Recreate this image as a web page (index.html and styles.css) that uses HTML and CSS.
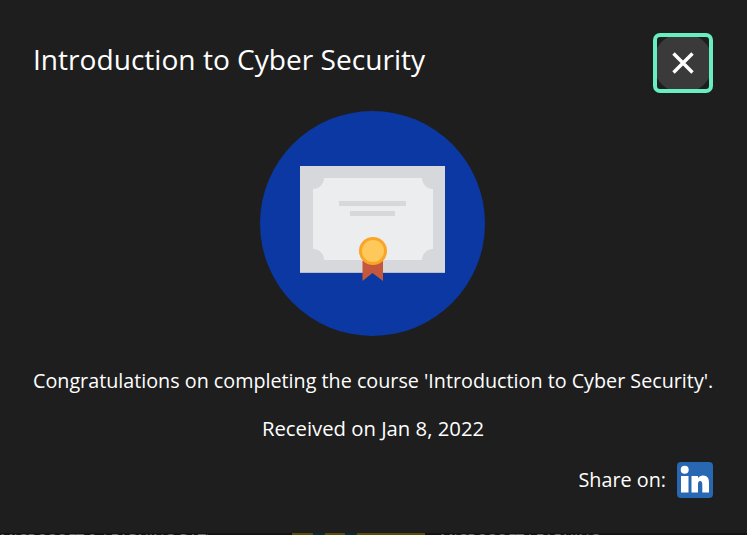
FILE: index.html
```html
<!DOCTYPE html>
<html lang="en">
<head>
<meta charset="utf-8">
<title>Introduction to Cyber Security</title>
<link rel="stylesheet" href="styles.css">
</head>
<body>
<main class="modal">
  <header class="modal-head">
    <h1 class="modal-title">Introduction to Cyber Security</h1>
    <button class="close" aria-label="Close">
      <svg class="close-icon" viewBox="0 0 22 22"><path d="M1.500 1.500 20.500 20.500M20.500 1.500 1.500 20.500"/></svg>
    </button>
  </header>
  <div class="badge-wrap">
    <svg class="badge" viewBox="0 0 225 225">
      <circle cx="112.5" cy="112.5" r="112.5" fill="#0b38a2"/>
      <rect x="40" y="55" width="145" height="107" fill="#d7d8db"/>
      <rect x="40" y="161" width="145" height="1" fill="#b9bccb"/>
      <path d="M64 67H162A11 11 0 0 0 173 78V138A11 11 0 0 0 162 149H64A11 11 0 0 0 53 138V78A11 11 0 0 0 64 67Z" fill="#ecedef"/>
      <rect x="79" y="90" width="67" height="5" fill="#d7d8db"/>
      <rect x="90" y="100" width="45" height="5" fill="#d7d8db"/>
      <path d="M102.500 150H123V170L112.500 162 102.500 170Z" fill="#c4583c"/>
      <circle cx="113" cy="140" r="12.500" fill="#fec85a" stroke="#faa526" stroke-width="3"/>
    </svg>
  </div>
  <p class="message">Congratulations on completing the course 'Introduction to Cyber Security'.</p>
  <p class="received">Received on Jan 8, 2022</p>
  <div class="share">
    <span class="share-label">Share on:</span>
    <svg class="linkedin" viewBox="0 0 36 36">
      <rect width="36" height="36" rx="4" fill="#2867b2"/>
      <circle cx="7.700" cy="7.800" r="4" fill="#fff"/>
      <rect x="4" y="14" width="7.500" height="16.500" fill="#fff"/>
      <path d="M14.500 14H21V16.300C22 14.700 24 13.600 26 13.600 30.500 13.600 32 16.500 32 21V30.500H25.300V22.300C25.300 20.300 24.600 19 23.200 19 21.500 19 21 20.500 21 22.300V30.500H14.500Z" fill="#fff"/>
    </svg>
  </div>
</main>
<div class="under-strip">
  <span class="under-text under-left">MICROSOFT &amp; LEARNING PATH</span>
  <span class="under-gold">
    <span class="gold-a"></span>
    <span class="gold-b"></span>
    <span class="gold-c"></span>
  </span>
  <span class="under-text under-right">MICROSOFT LEARNING</span>
</div>
</body>
</html>
```

FILE: styles.css
```css
html, body {
  margin: 0;
  padding: 0;
  width: 747px;
  height: 535px;
  overflow: hidden;
  background: #141414;
}
body {
  font-family: "Open Sans", "Noto Sans", sans-serif;
  color: #fff;
}
.modal {
  box-sizing: border-box;
  height: 533px;
  background: #1e1e1e;
  padding: 33px 34px 0 33px;
  display: flex;
  flex-direction: column;
}
.modal-head {
  display: flex;
  justify-content: space-between;
  align-items: flex-start;
  height: 78px;
}
.modal-title {
  margin: 0;
  font-size: 28.100px;
  line-height: 52px;
  font-weight: 400;
}
.close {
  box-sizing: border-box;
  width: 60px;
  height: 60px;
  padding: 0;
  border: 4px solid #68eec2;
  border-radius: 7px;
  background: #1e1e1e;
  display: flex;
  align-items: center;
  justify-content: center;
  position: relative;
  overflow: hidden;
}
.close::before {
  content: "";
  position: absolute;
  inset: -4px;
  border-radius: 50%;
  background: #3a3a3a;
}
.close-icon {
  width: 22px;
  height: 22px;
  position: relative;
  fill: none;
  stroke: #fff;
  stroke-width: 3.400;
}
.badge-wrap {
  display: flex;
  justify-content: center;
  margin-left: -1px;
}
.badge {
  width: 225px;
  height: 225px;
  display: block;
}
.message, .received {
  margin: 0;
  text-align: center;
  line-height: 26px;
  white-space: nowrap;
}
.message { margin-top: 32px; font-size: 19.740px; }
.received { margin-top: 21px; font-size: 20.300px; }
.share {
  display: flex;
  justify-content: flex-end;
  align-items: center;
  gap: 11px;
  margin-top: 21px;
}
.share-label { font-size: 19.800px; line-height: 36px; }
.linkedin { width: 36px; height: 36px; display: block; }
.under-strip {
  height: 2px;
  overflow: hidden;
  display: flex;
  align-items: flex-start;
}
.under-text {
  font-size: 15px;
  line-height: 14px;
  margin-top: -2px;
  color: #6a6a6a;
  white-space: nowrap;
  flex: none;
  overflow: hidden;
}
.under-left { width: 208px; }
.under-gold {
  display: flex;
  width: 133px;
  height: 2px;
  margin-left: 84px;
  background: #0f2a2c;
  justify-content: space-between;
}
.gold-a, .gold-b, .gold-c { background: #5c4a0a; height: 2px; display: block; }
.gold-a { width: 21px; }
.gold-b { width: 20px; }
.gold-c { width: 68px; }
.under-right { width: 160px; margin-left: 15px; }
```
